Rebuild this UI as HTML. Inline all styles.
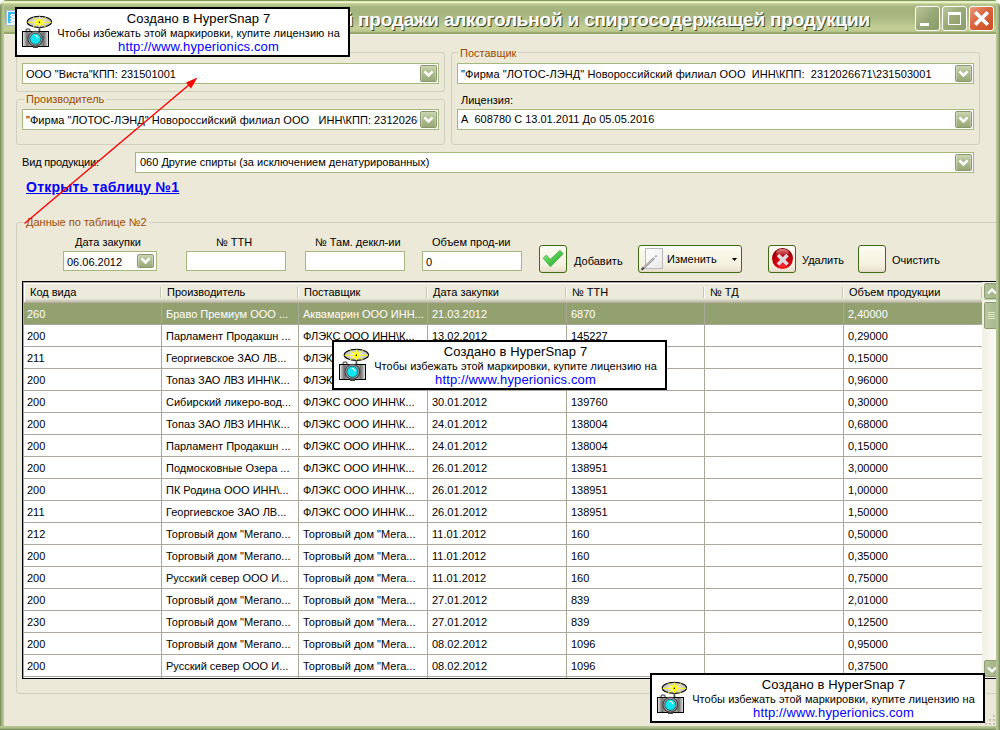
<!DOCTYPE html>
<html><head><meta charset="utf-8">
<style>
*{margin:0;padding:0;box-sizing:border-box}
html,body{width:1000px;height:730px;overflow:hidden;background:#fff}
body{position:relative;font-family:"Liberation Sans",sans-serif;font-size:11px;color:#000}
.a{position:absolute}
.t{position:absolute;white-space:nowrap;line-height:13px;font-size:11px}
.grp{position:absolute;border:1px solid #D0D0BF;border-radius:3px}
.gl{position:absolute;white-space:nowrap;line-height:13px;color:#9C4C02;background:#ECE9D8;padding:0 2px}
.cb{position:absolute;background:#fff;border:1px solid #A5B97F}
.ddb{position:absolute;width:17px;height:17px;border:1px solid #8A9870;border-radius:2px;
 background:linear-gradient(#CBD6B2,#B2C095 35%,#A5B485 70%,#98A875);box-shadow:inset 1px 0 0 rgba(255,255,255,.35),inset -1px 0 0 rgba(255,255,255,.25)}
.ddb svg{position:absolute;left:2px;top:4px}
.tb{position:absolute;background:#fff;border:1px solid #A5B97F}
.btn{position:absolute;width:28px;height:28px;border:1px solid #3F6A16;border-radius:3px;
 background:linear-gradient(#FFFFF8,#F9F7E9 25%,#F6F2E0 70%,#EEE7D3 88%,#E4D8C6)}
.hs{position:absolute;width:335px;height:50px;border:2px solid #000;background:#fff;font-family:"Liberation Sans",sans-serif}
.hs .l1{position:absolute;left:0;width:331px;padding-left:32px;text-align:center;font-size:13px;line-height:15px;top:1.5px;letter-spacing:0.1px}
.hs .l2{position:absolute;left:0;width:331px;padding-left:32px;text-align:center;font-size:11px;line-height:13px;top:18px;letter-spacing:0.06px}
.hs .l3{position:absolute;left:0;width:331px;padding-left:32px;text-align:center;font-size:13px;line-height:15px;top:29.5px;letter-spacing:0.13px;color:#0000FF}
.hs svg{position:absolute;left:5px;top:6px}
.row{position:absolute;left:23px;width:959px;height:21px}
.cell{position:absolute;white-space:nowrap;line-height:13px;top:5px}
</style></head><body>

<div class="a" style="left:0;top:0;width:1000px;height:730px;border-radius:7px 7px 0 0;background:#8FA36B;overflow:hidden">
 <div class="a" style="left:0;top:0;width:1000px;height:34px;background:linear-gradient(#7F985B 0,#7F985B 0.8px,#EEF6CC 1.6px,#EDF5CB 2.5px,#C3CF97 3.6px,#B5C38C 5px,#A7B57E 7px,#A5B37D 12px,#ABBA83 18px,#B9C78E 24px,#C3CD95 27px,#C2CD94 30px,#B6C48C 31.5px,#9AAB72 32.5px,#8FA562 33.3px,#8FA562 34px)"></div>
 <div class="a" style="left:0;top:4px;width:4px;height:726px;background:linear-gradient(90deg,#6F8451,#A9BA86 50%,#BAC99A)"></div>
 <div class="a" style="left:996px;top:4px;width:4px;height:726px;background:linear-gradient(90deg,#BAC99A,#A9BA86 50%,#6F8451)"></div>
 <div class="a" style="left:0;top:726px;width:1000px;height:4px;background:linear-gradient(#BAC99A,#A9BA86 50%,#6F8451)"></div>
</div>
<div class="a" style="left:4px;top:34px;width:992px;height:692px;background:linear-gradient(#F2EFE3 0,#F2EFE3 1px,#ECE9D8 1px)"></div>

<div class="a" style="left:6px;top:10px;width:10px;height:16px;background:#E6F6FA;border:1px solid #A8BCCB;border-right:none"><div class="a" style="left:1px;top:1px;width:9px;height:2px;background:#3CB8F4"></div><div class="a" style="left:1px;top:1px;width:3px;height:11px;background:#3CB8F4"></div><div class="a" style="left:3px;top:4px;width:1px;height:8px;background:repeating-linear-gradient(#fff 0,#fff 1px,#3CB8F4 1px,#3CB8F4 3px)"></div><div class="a" style="left:5px;top:4px;width:4px;height:8px;background:repeating-linear-gradient(#C9D5DA 0,#C9D5DA 1px,#F4FAFC 1px,#F4FAFC 3px)"></div></div>

<div class="a" style="left:340px;top:0;width:560px;height:34px;overflow:hidden">
<div class="t" style="right:30px;top:9px;font-size:19px;line-height:22px;font-weight:bold;color:#fff;letter-spacing:-0.2px;text-shadow:1px 1px 0 #3E4A28">Журнал учета объема розничной продажи алкогольной и спиртосодержащей продукции</div>
</div>

<div class="a" style="left:915px;top:6px;width:25px;height:25px;border:1px solid #fff;border-radius:3px;background:linear-gradient(135deg,#B8C69A,#98A977 50%,#8A9C69)"><div class="a" style="left:4px;top:16px;width:9px;height:3px;background:#fff"></div></div>
<div class="a" style="left:942px;top:6px;width:25px;height:25px;border:1px solid #fff;border-radius:3px;background:linear-gradient(135deg,#B8C69A,#98A977 50%,#8A9C69)"><div class="a" style="left:5px;top:5px;width:13px;height:13px;border:1px solid #fff;border-top-width:3px"></div></div>
<div class="a" style="left:969px;top:6px;width:25px;height:25px;border:1px solid #fff;border-radius:3px;background:linear-gradient(135deg,#E89B80,#D9643C 45%,#C94E22)"><svg class="a" style="left:3px;top:4px" width="17" height="16"><path d="M2.2 1.2 L14.8 13.8 M14.8 1.2 L2.2 13.8" stroke="#fff" stroke-width="3.6"/></svg></div>
<div class="grp" style="left:16px;top:52px;width:429px;height:40px"></div>
<div class="grp" style="left:16px;top:99px;width:429px;height:46px"></div>
<div class="gl" style="left:24px;top:93px">Производитель</div>
<div class="grp" style="left:451px;top:52px;width:529px;height:93px"></div>
<div class="gl" style="left:458px;top:47px">Поставщик</div>
<div class="t" style="left:461px;top:94px">Лицензия:</div>
<div class="cb" style="left:22px;top:63px;width:417px;height:21px"></div>
<div class="t" style="left:26px;top:68px">ООО "Виста"КПП: 231501001</div>
<div class="ddb" style="left:420px;top:65px;height:17px"><svg style="top:4px" width="11" height="8"><path d="M1.4 1.4 L5.5 5.5 L9.6 1.4" stroke="#fff" stroke-width="2.6" fill="none"/></svg></div>
<div class="cb" style="left:22px;top:109px;width:417px;height:21px"></div>
<div class="a" style="left:23px;top:110px;width:395px;height:19px;overflow:hidden"><div class="t" style="left:3px;top:4px;letter-spacing:0.05px">"Фирма "ЛОТОС-ЛЭНД" Новороссийский филиал ООО&nbsp;&nbsp; ИНН\КПП: 2312026671\231503001</div></div>
<div class="ddb" style="left:420px;top:111px;height:17px"><svg style="top:4px" width="11" height="8"><path d="M1.4 1.4 L5.5 5.5 L9.6 1.4" stroke="#fff" stroke-width="2.6" fill="none"/></svg></div>
<div class="cb" style="left:457px;top:63px;width:517px;height:21px"></div>
<div class="t" style="left:461px;top:68px;letter-spacing:0.08px">"Фирма "ЛОТОС-ЛЭНД" Новороссийский филиал ООО&nbsp; ИНН\КПП:&nbsp; 2312026671\231503001</div>
<div class="ddb" style="left:955px;top:65px;height:17px"><svg style="top:4px" width="11" height="8"><path d="M1.4 1.4 L5.5 5.5 L9.6 1.4" stroke="#fff" stroke-width="2.6" fill="none"/></svg></div>
<div class="cb" style="left:457px;top:109px;width:517px;height:21px"></div>
<div class="t" style="left:461px;top:113px">А&nbsp; 608780 С 13.01.2011 До 05.05.2016</div>
<div class="ddb" style="left:955px;top:111px;height:17px"><svg style="top:4px" width="11" height="8"><path d="M1.4 1.4 L5.5 5.5 L9.6 1.4" stroke="#fff" stroke-width="2.6" fill="none"/></svg></div>
<div class="t" style="left:22px;top:156px;letter-spacing:-0.17px">Вид продукции:</div>
<div class="cb" style="left:135px;top:152px;width:839px;height:21px"></div>
<div class="t" style="left:140px;top:156px">060 Другие спирты (за исключением денатурированных)</div>
<div class="ddb" style="left:955px;top:154px;height:17px"><svg style="top:4px" width="11" height="8"><path d="M1.4 1.4 L5.5 5.5 L9.6 1.4" stroke="#fff" stroke-width="2.6" fill="none"/></svg></div>
<div class="t" style="left:26px;top:179px;font-size:14px;line-height:17px;font-weight:bold;color:#0000FF;text-decoration:underline;letter-spacing:0.25px">Открыть таблицу №1</div>
<div class="grp" style="left:16px;top:222px;width:1000px;height:472px"></div>
<div class="gl" style="left:24px;top:216px">Данные по таблице №2</div>
<div class="t" style="left:75px;top:236px">Дата закупки</div>
<div class="t" style="left:216px;top:236px">№ ТТН</div>
<div class="t" style="left:315px;top:236px">№ Там. деккл-ии</div>
<div class="t" style="left:432px;top:236px">Объем прод-ии</div>
<div class="tb" style="left:63px;top:251px;width:94px;height:20px"></div>
<div class="t" style="left:67px;top:256px">06.06.2012</div>
<div class="ddb" style="left:137px;top:254px;height:14px"><svg style="top:2px" width="11" height="8"><path d="M1.4 1.4 L5.5 5.5 L9.6 1.4" stroke="#fff" stroke-width="2.6" fill="none"/></svg></div>
<div class="tb" style="left:186px;top:251px;width:100px;height:20px"></div>
<div class="tb" style="left:305px;top:251px;width:100px;height:20px"></div>
<div class="tb" style="left:422px;top:251px;width:100px;height:20px"></div>
<div class="t" style="left:426px;top:256px">0</div>
<div class="btn" style="left:539px;top:245px"><svg class="a" style="left:0;top:0" width="26" height="26"><defs><linearGradient id="chk" x1="0" y1="0" x2="1" y2="1"><stop offset="0" stop-color="#8FE88F"/><stop offset=".5" stop-color="#4CCB4C"/><stop offset="1" stop-color="#1E9A1E"/></linearGradient></defs><path d="M3 12.2 L6.2 9.1 L10.4 13.3 L20 4.3 L23.2 7.8 L10.4 20.8 Z" fill="url(#chk)" stroke="#2E9E2E" stroke-width=".6" stroke-linejoin="round"/></svg></div>
<div class="t" style="left:574px;top:255px">Добавить</div>
<div class="btn" style="left:638px;top:245px;width:104px"><div class="a" style="left:6px;top:2px;width:18px;height:21px;border:1px solid #B8B8B8;background:linear-gradient(135deg,#fff,#E8E8E8)"></div><svg class="a" style="left:0;top:0" width="24" height="26"><path d="M3.5 23 L15.2 12" stroke="#8E8E8E" stroke-width="2.4"/><path d="M3.8 22.3 L15 12" stroke="#DADADA" stroke-width=".9"/><path d="M2.6 23.8 L4.8 21.6" stroke="#444" stroke-width="2"/><path d="M16.2 10.8 L17.6 9.6" stroke="#9A9A9A" stroke-width="1.5"/></svg><svg class="a" style="left:93px;top:12px" width="6" height="4"><path d="M0 0 H5 L2.5 3 Z" fill="#000"/></svg></div>
<div class="t" style="left:667px;top:253px">Изменить</div>
<div class="btn" style="left:768px;top:245px"><div class="a" style="left:3px;top:2px;width:21px;height:21px;border-radius:50%;background:radial-gradient(circle at 50% 85%,#FF3030 0,#E00010 25%,#B8000A 55%,#6A0005 100%)"><div class="a" style="left:4px;top:1px;width:13px;height:7px;border-radius:50%;background:linear-gradient(rgba(255,200,200,.7),rgba(255,80,80,0))"></div></div><svg class="a" style="left:7px;top:7px" width="14" height="14"><path d="M2 2 L11.5 11.5 M11.5 2 L2 11.5" stroke="#DCDCDC" stroke-width="3.6"/></svg></div>
<div class="t" style="left:802px;top:254px">Удалить</div>
<div class="btn" style="left:858px;top:245px"></div>
<div class="t" style="left:892px;top:254px">Очистить</div>
<div class="a" style="left:22px;top:281px;width:980px;height:398px;border:1px solid #000;border-right:none;background:#fff;overflow:hidden">
<div class="a" style="left:0;top:1px;width:959px;height:20px;background:linear-gradient(#fff 0,#fff 1px,#EBEADB 1px,#EBEADB 15px,#EBE9DA 15px,#EBE9DA 16px,#DEDCCB 16px,#DEDCCB 17px,#D2D0BE 17px,#D2D0BE 18px,#C5C2B0 18px,#C5C2B0 19px,#B7AFA5 19px)"></div>
<div class="cell" style="left:7px;top:4px">Код вида</div>
<div class="cell" style="left:144px;top:4px">Производитель</div>
<div class="a" style="left:137px;top:5px;width:1px;height:11px;background:#C7C5B2"></div><div class="a" style="left:138px;top:5px;width:1px;height:11px;background:#fff"></div>
<div class="cell" style="left:281px;top:4px">Поставщик</div>
<div class="a" style="left:274px;top:5px;width:1px;height:11px;background:#C7C5B2"></div><div class="a" style="left:275px;top:5px;width:1px;height:11px;background:#fff"></div>
<div class="cell" style="left:410px;top:4px">Дата закупки</div>
<div class="a" style="left:403px;top:5px;width:1px;height:11px;background:#C7C5B2"></div><div class="a" style="left:404px;top:5px;width:1px;height:11px;background:#fff"></div>
<div class="cell" style="left:549px;top:4px">№ ТТН</div>
<div class="a" style="left:542px;top:5px;width:1px;height:11px;background:#C7C5B2"></div><div class="a" style="left:543px;top:5px;width:1px;height:11px;background:#fff"></div>
<div class="cell" style="left:687px;top:4px">№ ТД</div>
<div class="a" style="left:680px;top:5px;width:1px;height:11px;background:#C7C5B2"></div><div class="a" style="left:681px;top:5px;width:1px;height:11px;background:#fff"></div>
<div class="cell" style="left:826px;top:4px">Объем продукции</div>
<div class="a" style="left:819px;top:5px;width:1px;height:11px;background:#C7C5B2"></div><div class="a" style="left:820px;top:5px;width:1px;height:11px;background:#fff"></div>
<div class="a" style="left:958px;top:5px;width:1px;height:11px;background:#C7C5B2"></div>
<div class="row" style="left:0;top:21px;background:#93A070;color:#fff">
<div class="cell" style="left:4px">260</div>
<div class="cell" style="left:143px">Браво Премиум ООО  ...</div>
<div class="cell" style="left:280px">Аквамарин ООО ИНН...</div>
<div class="cell" style="left:409px">21.03.2012</div>
<div class="cell" style="left:548px">6870</div>
<div class="cell" style="left:825px">2,40000</div>
</div>
<div class="row" style="left:0;top:43px;background:#fff;color:#000">
<div class="cell" style="left:4px">200</div>
<div class="cell" style="left:143px">Парламент Продакшн ...</div>
<div class="cell" style="left:280px">ФЛЭКС ООО ИНН\К...</div>
<div class="cell" style="left:409px">13.02.2012</div>
<div class="cell" style="left:548px">145227</div>
<div class="cell" style="left:825px">0,29000</div>
</div>
<div class="row" style="left:0;top:65px;background:#fff;color:#000">
<div class="cell" style="left:4px">211</div>
<div class="cell" style="left:143px">Георгиевское ЗАО ЛВ...</div>
<div class="cell" style="left:280px">ФЛЭКС ООО ИНН\К...</div>
<div class="cell" style="left:825px">0,15000</div>
</div>
<div class="row" style="left:0;top:87px;background:#fff;color:#000">
<div class="cell" style="left:4px">200</div>
<div class="cell" style="left:143px">Топаз ЗАО ЛВЗ ИНН\К...</div>
<div class="cell" style="left:280px">ФЛЭКС ООО ИНН\К...</div>
<div class="cell" style="left:825px">0,96000</div>
</div>
<div class="row" style="left:0;top:109px;background:#fff;color:#000">
<div class="cell" style="left:4px">200</div>
<div class="cell" style="left:143px">Сибирский ликеро-вод...</div>
<div class="cell" style="left:280px">ФЛЭКС ООО ИНН\К...</div>
<div class="cell" style="left:409px">30.01.2012</div>
<div class="cell" style="left:548px">139760</div>
<div class="cell" style="left:825px">0,30000</div>
</div>
<div class="row" style="left:0;top:131px;background:#fff;color:#000">
<div class="cell" style="left:4px">200</div>
<div class="cell" style="left:143px">Топаз ЗАО ЛВЗ ИНН\К...</div>
<div class="cell" style="left:280px">ФЛЭКС ООО ИНН\К...</div>
<div class="cell" style="left:409px">24.01.2012</div>
<div class="cell" style="left:548px">138004</div>
<div class="cell" style="left:825px">0,68000</div>
</div>
<div class="row" style="left:0;top:153px;background:#fff;color:#000">
<div class="cell" style="left:4px">200</div>
<div class="cell" style="left:143px">Парламент Продакшн ...</div>
<div class="cell" style="left:280px">ФЛЭКС ООО ИНН\К...</div>
<div class="cell" style="left:409px">24.01.2012</div>
<div class="cell" style="left:548px">138004</div>
<div class="cell" style="left:825px">0,15000</div>
</div>
<div class="row" style="left:0;top:175px;background:#fff;color:#000">
<div class="cell" style="left:4px">200</div>
<div class="cell" style="left:143px">Подмосковные Озера ...</div>
<div class="cell" style="left:280px">ФЛЭКС ООО ИНН\К...</div>
<div class="cell" style="left:409px">26.01.2012</div>
<div class="cell" style="left:548px">138951</div>
<div class="cell" style="left:825px">3,00000</div>
</div>
<div class="row" style="left:0;top:197px;background:#fff;color:#000">
<div class="cell" style="left:4px">200</div>
<div class="cell" style="left:143px">ПК Родина ООО ИНН\...</div>
<div class="cell" style="left:280px">ФЛЭКС ООО ИНН\К...</div>
<div class="cell" style="left:409px">26.01.2012</div>
<div class="cell" style="left:548px">138951</div>
<div class="cell" style="left:825px">1,00000</div>
</div>
<div class="row" style="left:0;top:219px;background:#fff;color:#000">
<div class="cell" style="left:4px">211</div>
<div class="cell" style="left:143px">Георгиевское ЗАО ЛВ...</div>
<div class="cell" style="left:280px">ФЛЭКС ООО ИНН\К...</div>
<div class="cell" style="left:409px">26.01.2012</div>
<div class="cell" style="left:548px">138951</div>
<div class="cell" style="left:825px">1,50000</div>
</div>
<div class="row" style="left:0;top:241px;background:#fff;color:#000">
<div class="cell" style="left:4px">212</div>
<div class="cell" style="left:143px">Торговый дом "Мегапо...</div>
<div class="cell" style="left:280px">Торговый дом "Мега...</div>
<div class="cell" style="left:409px">11.01.2012</div>
<div class="cell" style="left:548px">160</div>
<div class="cell" style="left:825px">0,50000</div>
</div>
<div class="row" style="left:0;top:263px;background:#fff;color:#000">
<div class="cell" style="left:4px">200</div>
<div class="cell" style="left:143px">Торговый дом "Мегапо...</div>
<div class="cell" style="left:280px">Торговый дом "Мега...</div>
<div class="cell" style="left:409px">11.01.2012</div>
<div class="cell" style="left:548px">160</div>
<div class="cell" style="left:825px">0,35000</div>
</div>
<div class="row" style="left:0;top:285px;background:#fff;color:#000">
<div class="cell" style="left:4px">200</div>
<div class="cell" style="left:143px">Русский север ООО И...</div>
<div class="cell" style="left:280px">Торговый дом "Мега...</div>
<div class="cell" style="left:409px">11.01.2012</div>
<div class="cell" style="left:548px">160</div>
<div class="cell" style="left:825px">0,75000</div>
</div>
<div class="row" style="left:0;top:307px;background:#fff;color:#000">
<div class="cell" style="left:4px">200</div>
<div class="cell" style="left:143px">Торговый дом "Мегапо...</div>
<div class="cell" style="left:280px">Торговый дом "Мега...</div>
<div class="cell" style="left:409px">27.01.2012</div>
<div class="cell" style="left:548px">839</div>
<div class="cell" style="left:825px">2,01000</div>
</div>
<div class="row" style="left:0;top:329px;background:#fff;color:#000">
<div class="cell" style="left:4px">230</div>
<div class="cell" style="left:143px">Торговый дом "Мегапо...</div>
<div class="cell" style="left:280px">Торговый дом "Мега...</div>
<div class="cell" style="left:409px">27.01.2012</div>
<div class="cell" style="left:548px">839</div>
<div class="cell" style="left:825px">0,12500</div>
</div>
<div class="row" style="left:0;top:351px;background:#fff;color:#000">
<div class="cell" style="left:4px">200</div>
<div class="cell" style="left:143px">Торговый дом "Мегапо...</div>
<div class="cell" style="left:280px">Торговый дом "Мега...</div>
<div class="cell" style="left:409px">08.02.2012</div>
<div class="cell" style="left:548px">1096</div>
<div class="cell" style="left:825px">0,95000</div>
</div>
<div class="row" style="left:0;top:373px;background:#fff;color:#000">
<div class="cell" style="left:4px">200</div>
<div class="cell" style="left:143px">Русский север ООО И...</div>
<div class="cell" style="left:280px">Торговый дом "Мега...</div>
<div class="cell" style="left:409px">08.02.2012</div>
<div class="cell" style="left:548px">1096</div>
<div class="cell" style="left:825px">0,37500</div>
</div>
<div class="a" style="left:0;top:42px;width:959px;height:1px;background:#ACA899"></div>
<div class="a" style="left:0;top:64px;width:959px;height:1px;background:#ACA899"></div>
<div class="a" style="left:0;top:86px;width:959px;height:1px;background:#ACA899"></div>
<div class="a" style="left:0;top:108px;width:959px;height:1px;background:#ACA899"></div>
<div class="a" style="left:0;top:130px;width:959px;height:1px;background:#ACA899"></div>
<div class="a" style="left:0;top:152px;width:959px;height:1px;background:#ACA899"></div>
<div class="a" style="left:0;top:174px;width:959px;height:1px;background:#ACA899"></div>
<div class="a" style="left:0;top:196px;width:959px;height:1px;background:#ACA899"></div>
<div class="a" style="left:0;top:218px;width:959px;height:1px;background:#ACA899"></div>
<div class="a" style="left:0;top:240px;width:959px;height:1px;background:#ACA899"></div>
<div class="a" style="left:0;top:262px;width:959px;height:1px;background:#ACA899"></div>
<div class="a" style="left:0;top:284px;width:959px;height:1px;background:#ACA899"></div>
<div class="a" style="left:0;top:306px;width:959px;height:1px;background:#ACA899"></div>
<div class="a" style="left:0;top:328px;width:959px;height:1px;background:#ACA899"></div>
<div class="a" style="left:0;top:350px;width:959px;height:1px;background:#ACA899"></div>
<div class="a" style="left:0;top:372px;width:959px;height:1px;background:#ACA899"></div>
<div class="a" style="left:0;top:394px;width:959px;height:1px;background:#ACA899"></div>
<div class="a" style="left:138px;top:21px;width:1px;height:380px;background:#ACA899"></div>
<div class="a" style="left:275px;top:21px;width:1px;height:380px;background:#ACA899"></div>
<div class="a" style="left:404px;top:21px;width:1px;height:380px;background:#ACA899"></div>
<div class="a" style="left:543px;top:21px;width:1px;height:380px;background:#ACA899"></div>
<div class="a" style="left:681px;top:21px;width:1px;height:380px;background:#ACA899"></div>
<div class="a" style="left:820px;top:21px;width:1px;height:380px;background:#ACA899"></div>
<div class="a" style="left:959px;top:21px;width:1px;height:380px;background:#ACA899"></div>
<div class="a" style="left:0;top:0;width:959px;height:1px;background:#ACA899"></div>
<div class="a" style="left:0;top:0;width:1px;height:400px;background:#ACA899"></div>
<div class="a" style="left:1px;top:1px;width:1px;height:19px;background:#fff"></div>
<div class="a" style="left:959px;top:0;width:17px;height:396px;background:linear-gradient(90deg,#F1EFE5,#FDFDFA)"></div>
<div class="a" style="left:961px;top:1px;width:16px;height:16px;border:1px solid #8C9C72;border-radius:2px;background:linear-gradient(90deg,#B3C197,#9FAF83)"><svg class="a" style="left:2px;top:4px" width="10" height="7"><path d="M1 5.5 L5 1.5 L9 5.5" stroke="#fff" stroke-width="2.2" fill="none"/></svg></div>
<div class="a" style="left:961px;top:17px;width:16px;height:1px;background:#B4D69A"></div>
<div class="a" style="left:961px;top:20px;width:16px;height:27px;border:1px solid #8C9C72;border-radius:2px;background:linear-gradient(90deg,#B9C6A0,#A4B38A)"><div class="a" style="left:3px;top:9px;width:7px;height:1px;background:#DCE5C5;box-shadow:0 2px 0 #DCE5C5,0 4px 0 #DCE5C5,0 6px 0 #DCE5C5"></div></div>
<div class="a" style="left:961px;top:378px;width:16px;height:17px;border:1px solid #8C9C72;border-radius:2px;background:linear-gradient(90deg,#B3C197,#9FAF83)"><svg class="a" style="left:2px;top:5px" width="10" height="7"><path d="M1 1.5 L5 5.5 L9 1.5" stroke="#fff" stroke-width="2.2" fill="none"/></svg></div>
</div>
<div class="a" style="left:996px;top:34px;width:4px;height:696px;background:linear-gradient(90deg,#BAC99A,#A9BA86 50%,#6F8451)"></div>
<svg class="a" style="left:984px;top:714px" width="12" height="12"><rect x="9" y="1" width="2" height="2" fill="#C5C2B2"/><rect x="9" y="5" width="2" height="2" fill="#C5C2B2"/><rect x="5" y="5" width="2" height="2" fill="#C5C2B2"/><rect x="9" y="9" width="2" height="2" fill="#C5C2B2"/><rect x="5" y="9" width="2" height="2" fill="#C5C2B2"/><rect x="1" y="9" width="2" height="2" fill="#C5C2B2"/></svg>
<svg class="a" style="left:0;top:0" width="1000" height="730"><line x1="24.5" y1="223.5" x2="190" y2="84" stroke="#FF0000" stroke-width="1.4"/><path d="M197.5 77.5 L186 82.5 L191 88.5 Z" fill="#FF0000"/></svg>
<div class="hs" style="left:15px;top:7px"><svg width="30" height="34" viewBox="0 0 30 34">
<defs><radialGradient id="fg15" cx=".5" cy=".5" r=".6"><stop offset="0" stop-color="#FFFFFF"/><stop offset="1" stop-color="#A8A8A8"/></radialGradient>
<linearGradient id="cg15" x1="0" x2="1"><stop offset="0" stop-color="#F0F0F0"/><stop offset=".18" stop-color="#6E6E6E"/><stop offset=".35" stop-color="#C8C8C8"/><stop offset=".65" stop-color="#C8C8C8"/><stop offset=".82" stop-color="#6E6E6E"/><stop offset="1" stop-color="#F0F0F0"/></linearGradient></defs>
<ellipse cx="17.4" cy="6.9" rx="12.2" ry="5.6" fill="url(#fg15)" stroke="#000" stroke-width="1.1"/>
<path d="M5.5 7.3 H29.3 M17.4 1.5 V12.5 M11 2.5 L23.8 12 M23.8 2.5 L11 12" stroke="#FFFF00" stroke-width="1"/>
<circle cx="17.4" cy="7.2" r="3.3" fill="#FFFF20"/>
<circle cx="17.4" cy="7.2" r="0.8" fill="#000"/>
<rect x="16.5" y="12.5" width="1.8" height="4" fill="#555"/>
<rect x="4" y="14" width="4" height="2.5" rx="1" fill="#EEE" stroke="#000" stroke-width=".8"/>
<rect x="0.5" y="16.5" width="26" height="15" fill="url(#cg15)" stroke="#000" stroke-width="1"/>
<circle cx="13.4" cy="23.8" r="8" fill="#444"/>
<circle cx="13.4" cy="23.8" r="6.8" fill="#B8B8B8"/>
<circle cx="13.4" cy="23.8" r="5.6" fill="#10E4F0" stroke="#1A1A1A" stroke-width=".7"/>
<path d="M12.5 20.2 q3 .2 3.6 3" stroke="#E8FFFF" stroke-width="1.1" fill="none"/>
<rect x="11" y="31" width="5" height="2" fill="#444"/>
</svg><div class="l1">Создано в HyperSnap 7</div><div class="l2">Чтобы избежать этой маркировки, купите лицензию на</div><div class="l3">http://www.hyperionics.com</div></div>
<div class="hs" style="left:332px;top:340px"><svg width="30" height="34" viewBox="0 0 30 34">
<defs><radialGradient id="fg332" cx=".5" cy=".5" r=".6"><stop offset="0" stop-color="#FFFFFF"/><stop offset="1" stop-color="#A8A8A8"/></radialGradient>
<linearGradient id="cg332" x1="0" x2="1"><stop offset="0" stop-color="#F0F0F0"/><stop offset=".18" stop-color="#6E6E6E"/><stop offset=".35" stop-color="#C8C8C8"/><stop offset=".65" stop-color="#C8C8C8"/><stop offset=".82" stop-color="#6E6E6E"/><stop offset="1" stop-color="#F0F0F0"/></linearGradient></defs>
<ellipse cx="17.4" cy="6.9" rx="12.2" ry="5.6" fill="url(#fg332)" stroke="#000" stroke-width="1.1"/>
<path d="M5.5 7.3 H29.3 M17.4 1.5 V12.5 M11 2.5 L23.8 12 M23.8 2.5 L11 12" stroke="#FFFF00" stroke-width="1"/>
<circle cx="17.4" cy="7.2" r="3.3" fill="#FFFF20"/>
<circle cx="17.4" cy="7.2" r="0.8" fill="#000"/>
<rect x="16.5" y="12.5" width="1.8" height="4" fill="#555"/>
<rect x="4" y="14" width="4" height="2.5" rx="1" fill="#EEE" stroke="#000" stroke-width=".8"/>
<rect x="0.5" y="16.5" width="26" height="15" fill="url(#cg332)" stroke="#000" stroke-width="1"/>
<circle cx="13.4" cy="23.8" r="8" fill="#444"/>
<circle cx="13.4" cy="23.8" r="6.8" fill="#B8B8B8"/>
<circle cx="13.4" cy="23.8" r="5.6" fill="#10E4F0" stroke="#1A1A1A" stroke-width=".7"/>
<path d="M12.5 20.2 q3 .2 3.6 3" stroke="#E8FFFF" stroke-width="1.1" fill="none"/>
<rect x="11" y="31" width="5" height="2" fill="#444"/>
</svg><div class="l1">Создано в HyperSnap 7</div><div class="l2">Чтобы избежать этой маркировки, купите лицензию на</div><div class="l3">http://www.hyperionics.com</div></div>
<div class="hs" style="left:650px;top:673px"><svg width="30" height="34" viewBox="0 0 30 34">
<defs><radialGradient id="fg650" cx=".5" cy=".5" r=".6"><stop offset="0" stop-color="#FFFFFF"/><stop offset="1" stop-color="#A8A8A8"/></radialGradient>
<linearGradient id="cg650" x1="0" x2="1"><stop offset="0" stop-color="#F0F0F0"/><stop offset=".18" stop-color="#6E6E6E"/><stop offset=".35" stop-color="#C8C8C8"/><stop offset=".65" stop-color="#C8C8C8"/><stop offset=".82" stop-color="#6E6E6E"/><stop offset="1" stop-color="#F0F0F0"/></linearGradient></defs>
<ellipse cx="17.4" cy="6.9" rx="12.2" ry="5.6" fill="url(#fg650)" stroke="#000" stroke-width="1.1"/>
<path d="M5.5 7.3 H29.3 M17.4 1.5 V12.5 M11 2.5 L23.8 12 M23.8 2.5 L11 12" stroke="#FFFF00" stroke-width="1"/>
<circle cx="17.4" cy="7.2" r="3.3" fill="#FFFF20"/>
<circle cx="17.4" cy="7.2" r="0.8" fill="#000"/>
<rect x="16.5" y="12.5" width="1.8" height="4" fill="#555"/>
<rect x="4" y="14" width="4" height="2.5" rx="1" fill="#EEE" stroke="#000" stroke-width=".8"/>
<rect x="0.5" y="16.5" width="26" height="15" fill="url(#cg650)" stroke="#000" stroke-width="1"/>
<circle cx="13.4" cy="23.8" r="8" fill="#444"/>
<circle cx="13.4" cy="23.8" r="6.8" fill="#B8B8B8"/>
<circle cx="13.4" cy="23.8" r="5.6" fill="#10E4F0" stroke="#1A1A1A" stroke-width=".7"/>
<path d="M12.5 20.2 q3 .2 3.6 3" stroke="#E8FFFF" stroke-width="1.1" fill="none"/>
<rect x="11" y="31" width="5" height="2" fill="#444"/>
</svg><div class="l1">Создано в HyperSnap 7</div><div class="l2">Чтобы избежать этой маркировки, купите лицензию на</div><div class="l3">http://www.hyperionics.com</div></div>
</body></html>
